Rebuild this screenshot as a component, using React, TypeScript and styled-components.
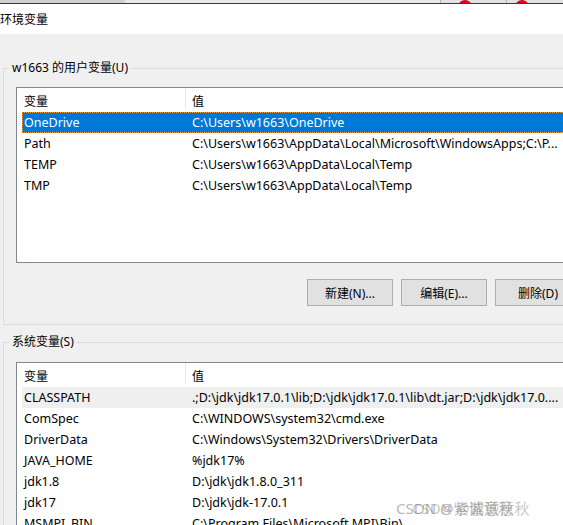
import React from 'react';
import styled, { createGlobalStyle } from 'styled-components';

const GlobalStyle = createGlobalStyle`
  html, body {
    margin: 0;
    padding: 0;
    background: #f0f0f0;
  }
  body {
    font-family: 'Segoe UI', 'Noto Sans', 'Noto Sans CJK SC', sans-serif;
    font-size: 12px;
    color: #000;
  }
`;

type EnvVar = { name: string; value: string };

const userVars: EnvVar[] = [
  { name: 'OneDrive', value: 'C:\\Users\\w1663\\OneDrive' },
  { name: 'Path', value: 'C:\\Users\\w1663\\AppData\\Local\\Microsoft\\WindowsApps;C:\\P...' },
  { name: 'TEMP', value: 'C:\\Users\\w1663\\AppData\\Local\\Temp' },
  { name: 'TMP', value: 'C:\\Users\\w1663\\AppData\\Local\\Temp' },
];

const systemVars: EnvVar[] = [
  { name: 'CLASSPATH', value: '.;D:\\jdk\\jdk17.0.1\\lib;D:\\jdk\\jdk17.0.1\\lib\\dt.jar;D:\\jdk\\jdk17.0....' },
  { name: 'ComSpec', value: 'C:\\WINDOWS\\system32\\cmd.exe' },
  { name: 'DriverData', value: 'C:\\Windows\\System32\\Drivers\\DriverData' },
  { name: 'JAVA_HOME', value: '%jdk17%' },
  { name: 'jdk1.8', value: 'D:\\jdk\\jdk1.8.0_311' },
  { name: 'jdk17', value: 'D:\\jdk\\jdk-17.0.1' },
  { name: 'MSMPI_BIN', value: 'C:\\Program Files\\Microsoft MPI\\Bin\\' },
];

type RowState = 'normal' | 'selected' | 'hot';

const VarList = ({ items, height, active, state }: { items: EnvVar[]; height: number; active: number; state: RowState }) => (
  <ListBox $height={height}>
    <HeaderRow>
      <HeaderCell $first>变量</HeaderCell>
      <HeaderCell>值</HeaderCell>
    </HeaderRow>
    {items.map((v, i) => (
      <Row key={v.name} $state={i === active ? state : 'normal'}>
        <NameCell>{v.name}</NameCell>
        <ValueCell>{v.value}</ValueCell>
      </Row>
    ))}
  </ListBox>
);

export default function App() {
  return (
    <>
      <GlobalStyle />
      <Page>
        <BackWindow>
          <BackTab $width={125} $dark />
          <BackTab $width={315} />
          <BackButton $dot={17}><RedDot /></BackButton>
          <BackButton $dot={8}><RedDot /></BackButton>
          <BackTab />
        </BackWindow>
        <TitleBar>环境变量</TitleBar>

        <Group>
          <Legend>w1663 的用户变量(U)</Legend>
          <VarList items={userVars} height={176} active={0} state="selected" />
          <ButtonRow>
            <Button>新建(N)...</Button>
            <Button>编辑(E)...</Button>
            <Button>删除(D)</Button>
          </ButtonRow>
        </Group>

        <Group $gap={9}>
          <Legend>系统变量(S)</Legend>
          <VarList items={systemVars} height={300} active={0} state="hot" />
        </Group>

        <Watermark>CSDN @紫诚意秋</Watermark>
      </Page>
    </>
  );
}

const Page = styled.div`
  position: relative;
  width: 563px;
  height: 525px;
  overflow: hidden;
  background: #f0f0f0;
`;

const BackWindow = styled.div`
  display: flex;
  height: 3px;
  border-bottom: 1px solid #3a3a3a;
  background: #e6e6e6;
  overflow: hidden;
`;

const BackTab = styled.div<{ $dark?: boolean; $width?: number }>`
  flex: ${({ $width }) => ($width ? `0 0 ${$width}px` : '1 1 auto')};
  background: ${({ $dark }) => ($dark ? '#d0d0d0' : '#e9e9e9')};
`;

const BackButton = styled.div<{ $dot: number }>`
  flex: 0 0 66px;
  display: flex;
  align-items: flex-end;
  padding-left: ${({ $dot }) => $dot}px;
  box-sizing: border-box;
  border-left: 1px solid #b4b4b4;
  background: #e2e2e2;
`;

const RedDot = styled.div`
  width: 14px;
  height: 14px;
  border-radius: 50%;
  background: #e0001b;
  margin-bottom: -11px;
`;

const TitleBar = styled.div`
  height: 30px;
  line-height: 30px;
  background: #fff;
  font-family: 'Noto Sans CJK SC', sans-serif;
  font-size: 12px;
`;

const Group = styled.fieldset<{ $gap?: number }>`
  box-sizing: border-box;
  width: 640px;
  min-inline-size: 0;
  margin: ${({ $gap }) => $gap ?? 26}px 0 0 3px;
  padding: 0 0 18px 0;
  border: 1px solid #dcdcdc;
`;

const Legend = styled.legend`
  margin-left: 5px;
  padding: 0 3px;
  height: 16px;
  line-height: 16px;
  font-size: 12px;
`;

const ListBox = styled.div<{ $height: number }>`
  box-sizing: border-box;
  margin: ${({ $height }) => ($height > 200 ? 12 : 11)}px 0 0 12px;
  width: 620px;
  height: ${({ $height }) => $height}px;
  background: #fff;
  border: 1px solid #828790;
  overflow: hidden;
`;

const HeaderRow = styled.div`
  display: flex;
  height: 24px;
  align-items: stretch;
`;

const HeaderCell = styled.div<{ $first?: boolean }>`
  box-sizing: border-box;
  flex: ${({ $first }) => ($first ? '0 0 169px' : '1 1 auto')};
  padding: 2px 0 0 ${({ $first }) => ($first ? 7 : 6)}px;
  line-height: 24px;
  border-right: ${({ $first }) => ($first ? '1px solid #e5e5e5' : 'none')};
  margin-bottom: ${({ $first }) => ($first ? 4 : 0)}px;
  white-space: nowrap;
`;

const Row = styled.div<{ $state: RowState }>`
  display: flex;
  height: 21px;
  line-height: 21px;
  margin-left: 5px;
  white-space: nowrap;
  font-size: 12.5px;
  background: ${({ $state }) =>
    $state === 'selected' ? '#0078d7' : $state === 'hot' ? '#efefef' : 'transparent'};
  color: ${({ $state }) => ($state === 'selected' ? '#fff' : '#000')};
  outline: ${({ $state }) => ($state === 'selected' ? '1px dotted #e9a04a' : 'none')};
  outline-offset: -1px;
`;

const NameCell = styled.div`
  box-sizing: border-box;
  flex: 0 0 168px;
  padding-left: 2px;
  overflow: hidden;
`;

const ValueCell = styled.div`
  flex: 1 1 auto;
  padding-left: 2px;
  overflow: hidden;
`;

const ButtonRow = styled.div`
  display: flex;
  gap: 8px;
  margin-top: 16px;
  padding-left: 303px;
`;

const Button = styled.button`
  box-sizing: border-box;
  flex: 0 0 86px;
  height: 27px;
  padding: 0;
  background: #e1e1e1;
  border: 1px solid #adadad;
  font-family: 'Segoe UI', 'Noto Sans', 'Noto Sans CJK SC', sans-serif;
  font-size: 12px;
  color: #000;
`;

const Watermark = styled.div`
  position: absolute;
  left: 396px;
  top: 497px;
  font-family: 'Noto Sans', 'Noto Sans CJK SC', sans-serif;
  font-size: 15px;
  color: rgba(120, 120, 120, 0.55);
  text-shadow: 16px 0 0 rgba(110, 110, 110, 0.4);
  white-space: nowrap;
`;
